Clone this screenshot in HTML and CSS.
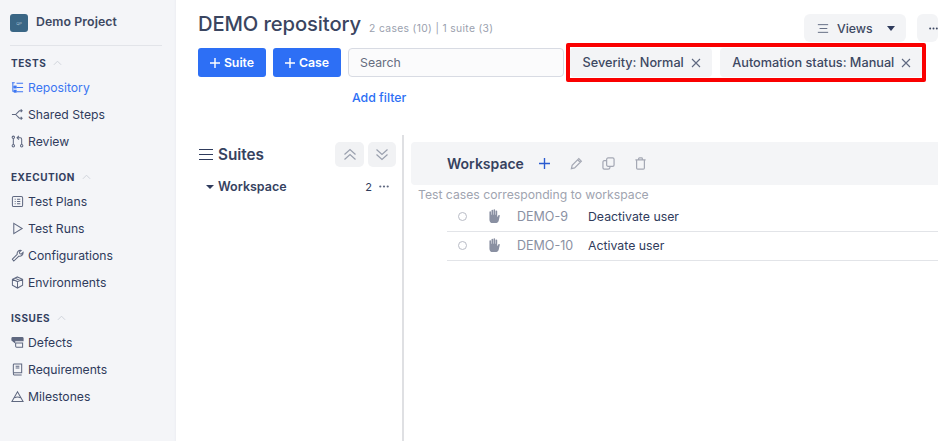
FILE: index.html
```html
<!DOCTYPE html>
<html lang="en">
<head>
    <meta charset="UTF-8">
    <meta name="viewport" content="width=device-width, initial-scale=1.0">
    <title>DEMO repository</title>
    <link rel="stylesheet" href="styles.css">
</head>
<body>
    <aside class="sidebar">
        <div class="project">
            <span class="project-logo">QP</span>
            <span class="project-name">Demo Project</span>
        </div>

        <div class="nav-head nav-head-first">TESTS <svg class="caret" viewBox="0 0 10 6"><path d="M1 5l4-4 4 4"/></svg></div>
        <a class="nav-item active"><svg viewBox="0 0 14 14"><path d="M1 2h3M2 2v9h2M2 6.500h2M6 2.500h7M6 7h7M6 11.500h7"/><rect x="3.500" y="5.500" width="2" height="2"/><rect x="3.500" y="10" width="2" height="2"/></svg>Repository</a>
        <a class="nav-item"><svg viewBox="0 0 14 14"><path d="M1 7h4l4-4h3M5 7l4 4h3M10.500 1.500l1.500 1.500-1.500 1.500M10.500 9.500l1.500 1.500-1.500 1.500"/></svg>Shared Steps</a>
        <a class="nav-item"><svg viewBox="0 0 14 14"><circle cx="2.500" cy="2.500" r="1.300"/><circle cx="2.500" cy="11.500" r="1.300"/><circle cx="11.500" cy="11.500" r="1.300"/><path d="M2.500 4v6M11.500 10V4.500Q11.500 3 10 3H7M8.500 1L6.500 3l2 2"/></svg>Review</a>

        <div class="nav-head">EXECUTION <svg class="caret" viewBox="0 0 10 6"><path d="M1 5l4-4 4 4"/></svg></div>
        <a class="nav-item"><svg viewBox="0 0 14 14"><rect x="1.500" y="1.500" width="11" height="11" rx="1.500"/><path d="M4 4.500h1M6.500 4.500H10M4 7h1M6.500 7H10M4 9.500h1M6.500 9.500H10"/></svg>Test Plans</a>
        <a class="nav-item"><svg viewBox="0 0 14 14"><path d="M3 1.500v11l9-5.500z"/></svg>Test Runs</a>
        <a class="nav-item"><svg viewBox="0 0 14 14"><path d="M1.500 11l5.200-5.300C6.200 3.500 8 1 11 1.500L9 3.500l.5 1.500 1.500.5 2-2c.3 3-2.200 4.800-4.500 4.200L3 13z"/></svg>Configurations</a>
        <a class="nav-item"><svg viewBox="0 0 14 14"><path d="M7 1l5.500 2.500v6.500L7 13l-5.500-3V3.500zM1.500 3.500L7 6l5.500-2.500M7 6v7M4.200 2.300l5.500 2.600"/></svg>Environments</a>

        <div class="nav-head">ISSUES <svg class="caret" viewBox="0 0 10 6"><path d="M1 5l4-4 4 4"/></svg></div>
        <a class="nav-item"><svg viewBox="0 0 14 14"><path class="solid" d="M1 2.500Q1 1.500 2 1.500h10q1 0 1 1V5H4v2L1 4.500z"/><path d="M5 7.500h7.500v4.500H6Q5 12 5 11z"/></svg>Defects</a>
        <a class="nav-item"><svg viewBox="0 0 14 14"><path d="M2.500 10.500V2q0-1 1-1h8v9.500h-8q-1 0-1 1.200t1 1.300h8M5 3.500h4M5 5.500h4"/></svg>Requirements</a>
        <a class="nav-item"><svg viewBox="0 0 14 14"><path d="M1 12.500L7 2l6 10.500zM3.800 8.500Q7 6.500 10.200 8.500"/></svg>Milestones</a>
    </aside>

    <main class="main">
        <div class="title-row">
            <h1>DEMO repository</h1>
            <span class="counts">2 cases (10) | 1 suite (3)</span>
            <button class="btn-grey views">
                <svg viewBox="0 0 14 12"><path d="M1 1.500h12M3 6h9M1 10.500h12"/></svg>
                Views
                <span class="tri"></span>
            </button>
            <button class="btn-grey more"><svg viewBox="0 0 10 3"><circle cx="1.300" cy="1.500" r="1.100"/><circle cx="5" cy="1.500" r="1.100"/><circle cx="8.700" cy="1.500" r="1.100"/></svg></button>
        </div>

        <div class="toolbar">
            <button class="btn-blue"><svg viewBox="0 0 12 12"><path d="M6 0v12M0 6h12"/></svg>Suite</button>
            <button class="btn-blue"><svg viewBox="0 0 12 12"><path d="M6 0v12M0 6h12"/></svg>Case</button>
            <div class="search">Search</div>
            <div class="chips">
                <span class="chip">Severity: Normal <svg viewBox="0 0 10 10"><path d="M1 1l8 8M9 1l-8 8"/></svg></span>
                <span class="chip">Automation status: Manual <svg viewBox="0 0 10 10"><path d="M1 1l8 8M9 1l-8 8"/></svg></span>
            </div>
        </div>
        <a class="add-filter">Add filter</a>

        <div class="split">
            <section class="suites">
                <div class="suites-head">
                    <svg class="suites-icon" viewBox="0 0 16 13"><path d="M1 1.500h14M1 6.500h14M1 11.500h14"/></svg>
                    <span class="suites-title">Suites</span>
                    <button class="btn-square"><svg viewBox="0 0 14 12"><path d="M1.500 6L7 1l5.500 5M1.500 11L7 6l5.500 5"/></svg></button>
                    <button class="btn-square"><svg viewBox="0 0 14 12"><path d="M1.500 1L7 6l5.500-5M1.500 6L7 11l5.500-5"/></svg></button>
                </div>
                <div class="tree-row">
                    <span class="tri tri-small"></span>
                    <span class="tree-name">Workspace</span>
                    <span class="tree-count">2</span>
                    <svg class="tree-more" viewBox="0 0 10 3"><circle cx="1.300" cy="1.500" r="1.100"/><circle cx="5" cy="1.500" r="1.100"/><circle cx="8.700" cy="1.500" r="1.100"/></svg>
                </div>
            </section>

            <section class="cases">
                <div class="cases-head">
                    <span class="cases-title">Workspace</span>
                    <svg class="act act-add" viewBox="0 0 12 12"><path d="M6 0v12M0 6h12"/></svg>
                    <svg class="act" viewBox="0 0 14 14"><path d="M1.500 12.500l.8-3.500L9.500 1.800l2.700 2.700L5 11.700zM8.300 3l2.700 2.700"/></svg>
                    <svg class="act" viewBox="0 0 14 14"><rect x="5" y="1" width="8" height="9" rx="1.500"/><path d="M5 4H2.500Q1 4 1 5.500v6Q1 13 2.500 13h4Q8.500 13 8.500 11.500V10"/></svg>
                    <svg class="act" viewBox="0 0 14 14"><path d="M1.500 3h11M5 3V1.800q0-.8.8-.8h2.400q.8 0 .8.8V3M2.800 3v8.800q0 1.200 1.200 1.200h6q1.200 0 1.200-1.200V3"/></svg>
                </div>
                <p class="cases-desc">Test cases corresponding to workspace</p>
                <div class="case-row">
                    <span class="dot"></span>
                    <svg class="hand" viewBox="0 0 14 14"><path d="M3 7V3.500a.7.7 0 0 1 1.400 0V6h.4V2.200a.7.7 0 0 1 1.400 0V6h.4V1.800a.7.7 0 0 1 1.400 0V6h.4V2.800a.7.7 0 0 1 1.400 0V8l1-1.500c.5-.7 1.600-.1 1.200.7L11 11.500c-.6 1-1.500 1.700-3 1.700H6c-2 0-3-1.300-3-3z"/></svg>
                    <span class="case-id">DEMO-9</span>
                    <span class="case-name">Deactivate user</span>
                </div>
                <div class="case-row">
                    <span class="dot"></span>
                    <svg class="hand" viewBox="0 0 14 14"><path d="M3 7V3.500a.7.7 0 0 1 1.400 0V6h.4V2.200a.7.7 0 0 1 1.400 0V6h.4V1.800a.7.7 0 0 1 1.400 0V6h.4V2.800a.7.7 0 0 1 1.400 0V8l1-1.500c.5-.7 1.600-.1 1.200.7L11 11.500c-.6 1-1.500 1.700-3 1.700H6c-2 0-3-1.300-3-3z"/></svg>
                    <span class="case-id">DEMO-10</span>
                    <span class="case-name">Activate user</span>
                </div>
            </section>
        </div>
    </main>
</body>
</html>
```

FILE: styles.css
```css
* {box-sizing: border-box}
html, body {margin: 0; height: 441px; overflow: hidden}
body {display: flex; width: 938px; font-family: "Inter", "Liberation Sans", sans-serif; font-size: 12.5px; color: #2f3b5c; background: #ffffff}
svg {fill: none; stroke: currentColor; stroke-width: 1.100; flex: none}
button {font-family: inherit; border: 0; padding: 0}

.sidebar {width: 176px; flex: none; height: 441px; background: #f4f5f8; padding: 14px 14px 0 10px; box-shadow: inset -3px 0 3px -3px #e6e8ee}
.project {display: flex; align-items: flex-start; gap: 8px; height: 18px}
.project-logo {width: 18px; height: 18px; border-radius: 3px; background: #3a6685; color: #a9c2d4; font-size: 4px; display: flex; align-items: center; justify-content: center}
.project-name {font-weight: 600; font-size: 12.300px; line-height: 16px; color: #3d4862; letter-spacing: 0.1px}
.nav-head {display: flex; align-items: center; gap: 7px; height: 14px; margin: 15px 0 4px 1px; font-size: 10px; font-weight: 700; letter-spacing: 0.55px; color: #33405f}
.nav-head-first {border-top: 1px solid #e2e4e9; height: 29px; margin: 13px 0 0 0; padding: 6px 0 0 1px}
.caret {width: 9px; height: 6px; color: #ccd0d8; stroke-width: 1}
.nav-item {display: flex; align-items: center; gap: 4px; height: 27px; margin-left: 1px; font-size: 12.200px; color: #2f3b5c}
.nav-item svg {width: 13px; height: 13px; color: #5f6880}
.nav-item.active, .nav-item.active svg {color: #3b75f2}
.nav-item.active rect {fill: currentColor}
.nav-item .solid {fill: currentColor}

.main {flex: 1; min-width: 0; padding-top: 14px; overflow: hidden}
.title-row {display: flex; align-items: center; height: 28px; padding-left: 22px}
h1 {margin: 0 0 10px 0; font-size: 20.200px; font-weight: 500; color: #3a4560; letter-spacing: -0.1px}
.counts {margin: 0 0 0 8px; font-size: 10.300px; color: #9a9fae; letter-spacing: 0.35px}
.btn-grey {background: #f3f4f6; color: #3d4862; border-radius: 6px; height: 28px; display: flex; align-items: center}
.views {margin-left: auto; width: 102px; padding: 0 11px 0 13px; font-size: 12.300px; font-weight: 500; gap: 8px}
.views svg {width: 12px; height: 11px; color: #5f6880}
.views .tri {margin-left: auto}
.more {width: 21px; margin: 0 0 0 11px; padding-left: 12px; color: #3d4862}
.more svg {width: 9px; height: 3px; fill: currentColor; stroke: none}
.tri {width: 0; height: 0; border-left: 4px solid transparent; border-right: 4px solid transparent; border-top: 5px solid #2f3b5c}

.toolbar {display: flex; align-items: center; height: 39px; margin-top: 1px; padding-left: 22px}
.btn-blue {display: flex; align-items: center; justify-content: center; gap: 4px; width: 68px; height: 29px; margin-right: 7px; background: #2d6ff5; color: #ffffff; border-radius: 3px; font-size: 12.300px; font-weight: 600}
.btn-blue svg {width: 10px; height: 10px; stroke-width: 1.700}
.search {width: 216px; height: 29px; border: 1px solid #d8dbe3; border-radius: 4px; background: #fbfbfc; padding: 0 11px; line-height: 27px; color: #666d80; font-size: 12.300px}
.chips {display: flex; gap: 8px; margin-left: 2px; height: 39px; padding: 1px 0; border: 4px solid #fa0000; border-radius: 2px}
.chip {display: flex; align-items: center; height: 29px; padding: 0 11px 0 12.500px; gap: 7px; background: #f3f4f6; border-radius: 4px; font-weight: 500; font-size: 12.700px; color: #3d4862; white-space: nowrap}
.chip svg {width: 10px; height: 10px; color: #5f6880}

.add-filter {display: block; margin: 8px 0 0 176px; height: 15px; line-height: 15px; font-size: 12.300px; font-weight: 500; color: #2d6ff5}

.split {display: flex; margin-top: 30px; height: 306px}
.suites {width: 228px; flex: none; padding: 7px 6px 0 22px; border-right: 2px solid #dfe0e3}
.suites-head {display: flex; align-items: center; height: 25px; gap: 4px}
.suites-icon {width: 16px; height: 13px; color: #2f3b5c}
.suites-title {flex: 1; font-size: 15.300px; font-weight: 600; color: #36425f}
.btn-square {display: flex; align-items: center; justify-content: center; width: 29px; height: 25px; background: #f1f2f4; border-radius: 5px; color: #9aa0ae}
.btn-square + .btn-square {width: 28px}
.btn-square svg {width: 14px; height: 13px; stroke-width: 1.200}
.tree-row {display: flex; align-items: center; margin-top: 12px; padding-left: 8px; height: 15px}
.tri-small {border-top-width: 4px}
.tree-name {flex: 1; margin-left: 4px; font-weight: 600; font-size: 12.500px; color: #36425f}
.tree-count {font-size: 11px; margin-right: 6px}
.tree-more {width: 12px; height: 3px; margin-right: 6px; fill: #5f6880; stroke: none}

.cases {flex: 1; min-width: 0; padding: 7px 0 0 7px}
.cases-head {display: flex; align-items: center; height: 43px; padding-left: 36px; background: #f4f5f7; border-radius: 4px 0 0 4px}
.cases-title {font-size: 14px; font-weight: 600; color: #36425f; margin-right: 15px}
.act {width: 13px; height: 13px; margin-right: 19px; color: #a4a8b4; stroke-width: 1.300}
.act-add {width: 11px; height: 11px; margin-right: 20px; color: #2a5bd0; stroke-width: 1.500}
.cases-desc {margin: 2px 0 0 7px; height: 16px; line-height: 15px; font-size: 12.200px; color: #a0a4b0}
.case-row {display: flex; align-items: center; height: 29px; margin-left: 36px; padding-bottom: 2px; border-bottom: 1px solid #e2e4e8}
.dot {width: 9px; height: 9px; margin-left: 11px; border: 1.500px solid #b9bcc6; border-radius: 50%}
.hand {width: 16px; height: 16px; margin-left: 19px; color: #8a90a2; fill: currentColor; stroke: none}
.case-id {width: 71px; margin-left: 15px; color: #8a90a2; font-size: 12.500px}
.case-name {color: #2f3b5c; font-size: 12.300px}
```
